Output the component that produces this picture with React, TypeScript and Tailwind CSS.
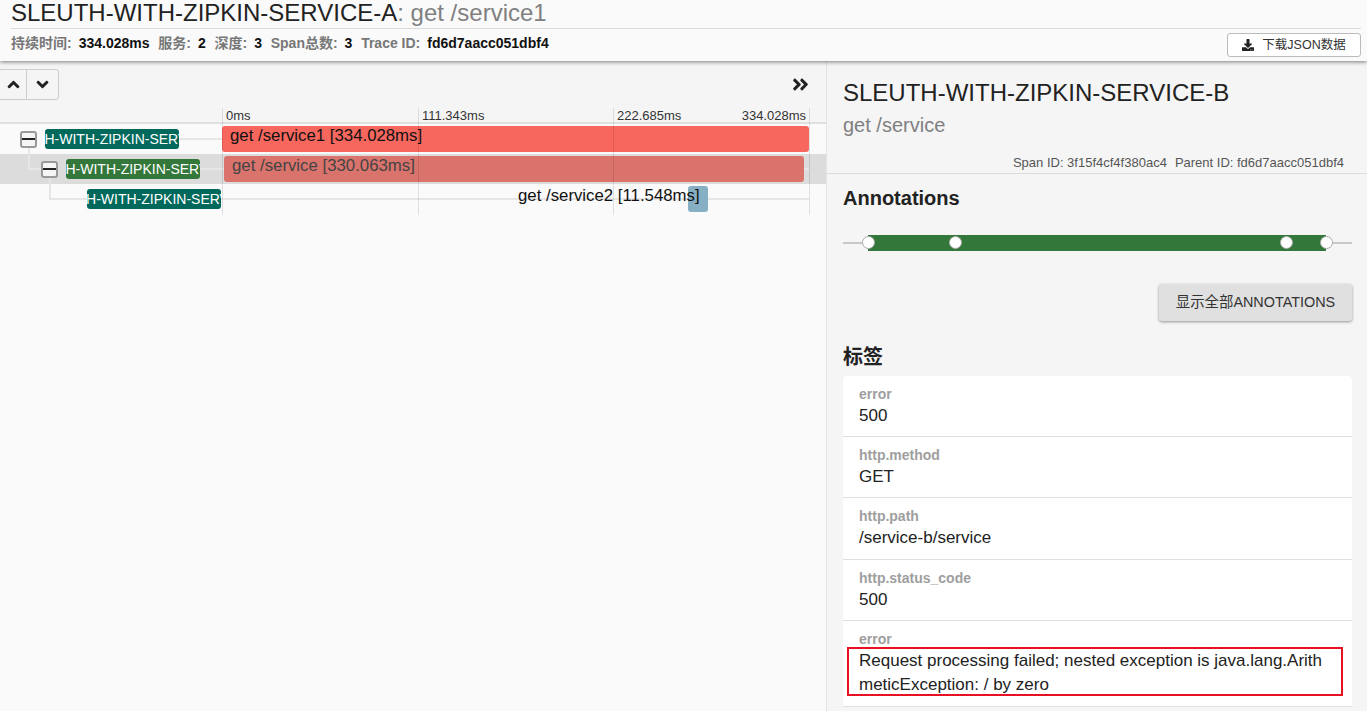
import { FaAngleUp, FaAngleDown, FaAngleDoubleRight, FaDownload } from 'react-icons/fa'

const sans = "font-['Liberation_Sans','Noto_Sans_CJK_SC',sans-serif]"

const stats = [
    ['持续时间:', '334.028ms'],
    ['服务:', '2'],
    ['深度:', '3'],
    ['Span总数:', '3'],
    ['Trace ID:', 'fd6d7aacc051dbf4'],
]

const ticks = [
    { left: 222, label: '0ms' },
    { left: 418, label: '111.343ms' },
    { left: 613, label: '222.685ms' },
]

const tags = [
    { key: 'error', value: '500', height: 'h-[61px]' },
    { key: 'http.method', value: 'GET', height: 'h-[61px]' },
    { key: 'http.path', value: '/service-b/service', height: 'h-[62px]' },
    { key: 'http.status_code', value: '500', height: 'h-[61px]' },
]

function Toggle() {
    return (
        <div className="w-[17px] h-[17px] rounded-[3px] border-2 border-[#999] bg-[#f5f5f5] flex items-center justify-center shrink-0">
            <div className="w-full h-[2px] bg-[#222]" />
        </div>
    )
}

function ServiceBadge({ name, color }: { name: string; color: string }) {
    return (
        <div className={`w-[134px] h-[20px] rounded-[3px] overflow-hidden flex items-center justify-center text-white text-[14px] whitespace-nowrap ${color}`}>
            <span className="shrink-0">{name}</span>
        </div>
    )
}

function Row({ selected, pad, toggle, name, color, children }: {
    selected?: boolean
    pad: string
    toggle?: boolean
    name: string
    color: string
    children: React.ReactNode
}) {
    return (
        <div className={`relative h-[30px] flex ${selected ? 'bg-[#dcdcdc]' : ''}`}>
            <div className="absolute left-[100px] right-[17px] top-[14px] h-[2px] bg-[#e6e6e6]" />
            <div className={`w-[222px] shrink-0 flex items-center justify-end relative z-10 ${pad}`}>
                {toggle && <div className="mr-[8px]"><Toggle /></div>}
                <ServiceBadge name={name} color={color} />
            </div>
            <div className="flex-1 relative">
                {children}
            </div>
        </div>
    )
}

export default function App() {
    return (
        <div className={`w-[1367px] h-[711px] overflow-hidden bg-[#f5f5f5] flex flex-col relative ${sans}`}>
            {/* header */}
            <div className="h-[61px] shrink-0 bg-[#fafafa] shadow-[0_1px_4px_rgba(0,0,0,0.5)] relative z-20 pl-[11px] pr-[6px]">
                <div className="h-[29px] border-b border-[#dcdcdc] text-[24px] leading-[26px] whitespace-nowrap text-[#222]">
                    SLEUTH-WITH-ZIPKIN-SERVICE-A<span className="text-[#808080]">: get /service1</span>
                </div>
                <div className="flex items-start justify-between">
                    <div className="flex gap-[8.75px] text-[14px] font-bold leading-[16px] mt-[6px]">
                        {stats.map(([label, value]) => (
                            <div key={label} className="flex gap-[7px] whitespace-nowrap">
                                <span className="text-[#777]">{label}</span>
                                <span className="text-[#111]">{value}</span>
                            </div>
                        ))}
                    </div>
                    <button className="mt-[4px] w-[134px] h-[24px] rounded-[3px] border border-[#bbb] bg-white flex items-center justify-center gap-[8px] text-[12.5px] text-[#333]">
                        <FaDownload size={12} className="text-[#222]" />
                        下载JSON数据
                    </button>
                </div>
            </div>

            <div className="flex-1 flex min-h-0">
                {/* timeline */}
                <div className="w-[827px] shrink-0 border-r border-[#e4e4e4] bg-[#fafafa] relative flex flex-col">
                    <div className="h-[47px] shrink-0 bg-[#f5f5f5] flex items-start justify-between pr-[16px]">
                        <div className="mt-[8px] ml-[-4px] h-[31px] flex rounded-[3px] border border-[#ccc] bg-[#f5f5f5]">
                            <div className="w-[30px] flex items-center justify-center border-r border-[#ccc] pl-[3px]">
                                <FaAngleUp size={19} className="text-[#222]" />
                            </div>
                            <div className="w-[31px] flex items-center justify-center">
                                <FaAngleDown size={19} className="text-[#222]" />
                            </div>
                        </div>
                        <FaAngleDoubleRight size={19} className="mt-[14px] text-[#222]" />
                    </div>
                    <div className="h-[16px] shrink-0 relative bg-[#f5f5f5] border-b-2 border-[#e0e0e0] text-[13px] leading-[14px] text-[#333]">
                        {ticks.map(t => (
                            <span key={t.left} className="absolute top-[1px] pl-[4px] whitespace-nowrap" style={{ left: t.left }}>{t.label}</span>
                        ))}
                        <span className="absolute top-[1px] right-[20px]">334.028ms</span>
                    </div>

                    <Row pad="pr-[43px]" toggle name="SLEUTH-WITH-ZIPKIN-SERVICE-A" color="bg-[#00695c]">
                        <div className="absolute left-0 top-[2px] w-[587px] h-[26px] rounded-[3px] bg-[#f7675e] text-[16.8px] leading-[20px] pl-[8px] text-[#111] whitespace-nowrap">
                            get /service1 [334.028ms]
                        </div>
                    </Row>
                    <Row selected pad="pr-[22px]" toggle name="SLEUTH-WITH-ZIPKIN-SERVICE-B" color="bg-[#33783a]">
                        <div className="absolute left-[2px] top-[2px] w-[580px] h-[26px] rounded-[3px] bg-[#da736c] text-[16.8px] leading-[20px] pl-[8px] text-[#444] whitespace-nowrap">
                            get /service [330.063ms]
                        </div>
                    </Row>
                    <Row pad="pr-[1px]" name="SLEUTH-WITH-ZIPKIN-SERVICE-C" color="bg-[#00695c]">
                        <div className="absolute left-[466px] top-[2px] w-[20px] h-[26px] rounded-[3px] bg-[#86afc4]" />
                        <div className="absolute left-[296px] top-[2px] text-[16.8px] leading-[20px] text-[#111] whitespace-nowrap">
                            get /service2 [11.548ms]
                        </div>
                    </Row>

                    {/* tick lines and tree connectors over the rows */}
                    {[222, 418, 613, 809].map(x => (
                        <div key={x} className="absolute top-[47px] h-[107px] w-px bg-[#000]/10" style={{ left: x }} />
                    ))}
                    <div className="absolute left-[28px] top-[86px] w-[2px] h-[23px] bg-[#e6e6e6]" />
                    <div className="absolute left-[28px] top-[107px] w-[14px] h-[2px] bg-[#e6e6e6]" />
                    <div className="absolute left-[49px] top-[116px] w-[2px] h-[23px] bg-[#e6e6e6]" />
                    <div className="absolute left-[49px] top-[137px] w-[38px] h-[2px] bg-[#e6e6e6]" />
                </div>

                {/* detail */}
                <div className="flex-1 min-w-0 bg-[#f5f5f5] flex flex-col">
                    <div className="h-[113px] shrink-0 border-b border-[#dcdcdc] pl-[16px] pr-[23px] relative">
                        <div className="text-[24px] leading-[28px] mt-[18px] text-[#222] whitespace-nowrap">SLEUTH-WITH-ZIPKIN-SERVICE-B</div>
                        <div className="text-[20px] leading-[24px] mt-[6px] text-[#808080]">get /service</div>
                        <div className="flex justify-end gap-[8px] mt-[19px] text-[13px] leading-[14px] text-[#555] whitespace-nowrap">
                            <span>Span ID: 3f15f4cf4f380ac4</span>
                            <span>Parent ID: fd6d7aacc051dbf4</span>
                        </div>
                    </div>

                    <div className="pl-[16px] pr-[15px] flex-1 min-h-0">
                        <div className="text-[20px] font-bold leading-[24px] mt-[12px] text-[#222]">Annotations</div>
                        <div className="relative h-[16px] mt-[25px]">
                            <div className="absolute left-0 right-0 top-[7px] h-[2px] bg-[#c8c8c8]" />
                            <div className="absolute left-[25px] right-[26px] top-0 h-[16px] bg-[#33783a]" />
                            {[19, 106, 437, 477].map(x => (
                                <div key={x} className="absolute top-[1px] w-[13px] h-[13px] rounded-full bg-white border border-[#aaa]" style={{ left: x }} />
                            ))}
                        </div>
                        <div className="flex justify-end mt-[33px]">
                            <button className="w-[193px] h-[37px] rounded-[3px] bg-[#e0e0e0] shadow-[0_1px_3px_rgba(0,0,0,0.4)] text-[14.4px] text-[#333]">
                                显示全部ANNOTATIONS
                            </button>
                        </div>
                        <div className="text-[20px] font-bold leading-[24px] mt-[24px] text-[#222]">标签</div>
                        <div className="mt-[7px] rounded-[4px] bg-white">
                            {tags.map(t => (
                                <div key={t.key + t.height} className={`${t.height} border-b border-[#e0e0e0] px-[16px] pt-[10px]`}>
                                    <div className="text-[14px] font-bold leading-[16px] text-[#9e9e9e]">{t.key}</div>
                                    <div className="text-[17px] leading-[24px] mt-[2px] text-[#222]">{t.value}</div>
                                </div>
                            ))}
                            <div className="h-[86px] border-b border-[#e0e0e0] px-[16px] pt-[10px]">
                                <div className="text-[14px] font-bold leading-[16px] text-[#9e9e9e]">error</div>
                                <div className="text-[17px] leading-[24px] mt-[2px] text-[#222] break-all">
                                    Request processing failed; nested exception is java.lang.ArithmeticException: / by zero
                                </div>
                            </div>
                        </div>
                    </div>
                </div>
            </div>

            {/* red box drawn over the screenshot */}
            <div className="absolute left-[847px] top-[647px] w-[496px] h-[49px] border-2 border-[#e81123] pointer-events-none z-30" />
        </div>
    )
}
